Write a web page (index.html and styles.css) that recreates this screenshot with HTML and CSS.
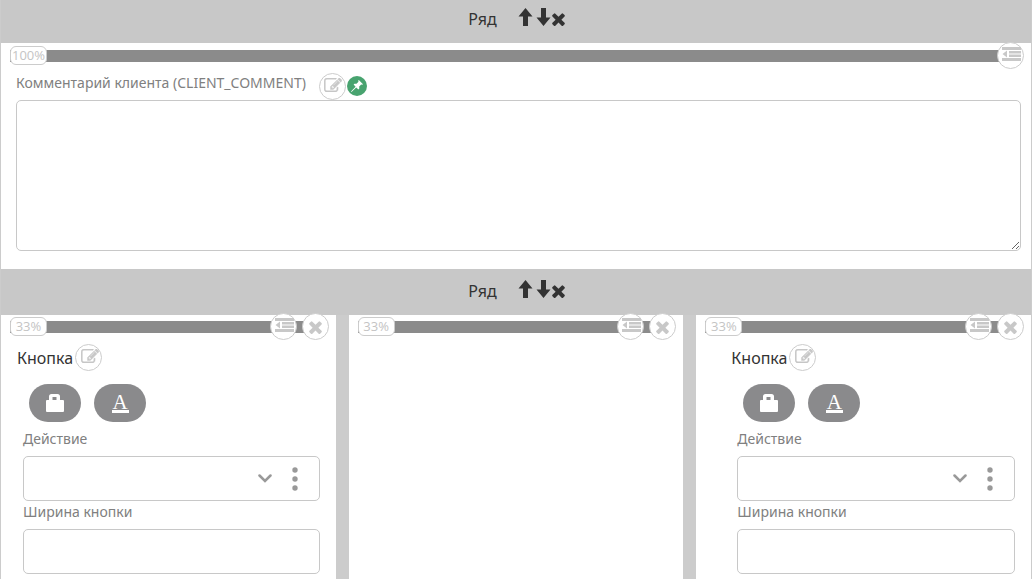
FILE: index.html
```html
<!DOCTYPE html>
<html lang="ru">

<head>
    <meta charset="UTF-8">
    <meta name="viewport" content="width=device-width, initial-scale=1.0">
    <title>Ряд</title>
    <link rel="stylesheet" href="styles.css">
</head>

<body>
    <!-- Shared icons -->
    <svg class="sprite" aria-hidden="true">
        <symbol id="i-up" viewBox="0 0 14 18">
            <path d="M7 0l7 8.500h-4.500V18h-5V8.500H0z"/>
        </symbol>
        <symbol id="i-down" viewBox="0 0 14 18">
            <path d="M7 18l7-8.500H9.500V0h-5v9.500H0z"/>
        </symbol>
        <symbol id="i-close" viewBox="302 238 1188 1316">
            <path d="M1490 1322q0 40-28 68l-136 136q-28 28-68 28t-68-28l-294-294-294 294q-28 28-68 28t-68-28l-136-136q-28-28-28-68t28-68l294-294-294-294q-28-28-28-68t28-68l136-136q28-28 68-28t68 28l294 294 294-294q28-28 68-28t68 28l136 136q28 28 28 68t-28 68l-294 294 294 294q28 28 28 68z"/>
        </symbol>
        <symbol id="i-outdent" viewBox="0 0 19 14">
            <path d="M0 0h19v3H0zM7 4h12v2.500H7zM7 7.500h12V10H7zM0 11h19v3H0zM5 3.500v7L0.500 7z"/>
        </symbol>
        <symbol id="i-edit" viewBox="0 128 1792 1408">
            <path stroke="currentColor" stroke-width="40" d="M888 1184l116-116-152-152-116 116v56h96v96h56zm440-720q-16-16-33 1l-350 350q-17 17-1 33t33-1l350-350q17-17 1-33zm80 594v190q0 119-84.500 203.500t-203.500 84.500h-832q-119 0-203.500-84.500t-84.500-203.500v-832q0-119 84.500-203.500t203.500-84.500h832q63 0 117 25 15 7 18 23 3 17-9 29l-49 49q-14 14-32 8-23-6-45-6h-832q-66 0-113 47t-47 113v832q0 66 47 113t113 47h832q66 0 113-47t47-113v-126q0-13 9-22l64-64q15-15 35-7t20 29zm-96-738l288 288-672 672h-288v-288zm444 132l-92 92-288-288 92-92q28-28 68-28t68 28l152 152q28 28 28 68t-28 68z"/>
        </symbol>
        <symbol id="i-pin" viewBox="0 0 12 12">
            <path d="M7.800 0L12 4.200l-.8.6-1-.3-2 2 .1 2-.9.9L5.200 7.400.5 12 0 11.500l4.600-4.700L2.600 4.600l.9-.9 2 .1 2-2-.3-1z"/>
        </symbol>
        <symbol id="i-bag" viewBox="0 0 18 18">
            <path fill-rule="evenodd" d="M1 6h2V2.500Q3 0 5.500 0h6Q14 0 14 2.500V6h3q1 0 1 1v10q0 1-1 1H1q-1 0-1-1V7q0-1 1-1zM6.500 3v3h4V3z"/>
        </symbol>
        <symbol id="i-chevron" viewBox="0 0 14 9">
            <path d="M1.500 1.500L7 7l5.500-5.500" fill="none" stroke="currentColor" stroke-width="2.500" stroke-linecap="round"/>
        </symbol>
        <symbol id="i-dots" viewBox="0 0 6 24">
            <circle cx="3" cy="3" r="2.700"/>
            <circle cx="3" cy="12" r="2.700"/>
            <circle cx="3" cy="21" r="2.700"/>
        </symbol>
    </svg>

    <main class="builder">
        <section>
            <header class="row-header">
                <span class="row-title">Ряд</span>
                <button class="row-btn" aria-label="Вверх"><svg class="arrow"><use href="#i-up"/></svg></button>
                <button class="row-btn" aria-label="Вниз"><svg class="arrow"><use href="#i-down"/></svg></button>
                <button class="row-btn" aria-label="Удалить"><svg class="cross"><use href="#i-close"/></svg></button>
            </header>
            <div class="column">
                <div class="toolbar">
                    <span class="size">100%</span>
                    <button class="round" aria-label="Отступ"><svg class="outdent"><use href="#i-outdent"/></svg></button>
                </div>
                <div class="comment">
                    <div class="comment-head">
                        <label for="comment">Комментарий клиента (CLIENT_COMMENT)</label>
                        <button class="round" aria-label="Изменить"><svg class="edit"><use href="#i-edit"/></svg></button>
                        <button class="pin" aria-label="Закрепить"><svg><use href="#i-pin"/></svg></button>
                    </div>
                    <textarea id="comment"></textarea>
                </div>
            </div>
        </section>

        <section>
            <header class="row-header">
                <span class="row-title">Ряд</span>
                <button class="row-btn" aria-label="Вверх"><svg class="arrow"><use href="#i-up"/></svg></button>
                <button class="row-btn" aria-label="Вниз"><svg class="arrow"><use href="#i-down"/></svg></button>
                <button class="row-btn" aria-label="Удалить"><svg class="cross"><use href="#i-close"/></svg></button>
            </header>
            <div class="columns">
                <div class="column">
                    <div class="toolbar">
                        <span class="size">33%</span>
                        <button class="round" aria-label="Отступ"><svg class="outdent"><use href="#i-outdent"/></svg></button>
                        <button class="round" aria-label="Удалить"><svg class="cross"><use href="#i-close"/></svg></button>
                    </div>
                    <div class="widget">
                        <div class="widget-head">
                            <span>Кнопка</span>
                            <button class="round" aria-label="Изменить"><svg class="edit"><use href="#i-edit"/></svg></button>
                        </div>
                        <div class="widget-body">
                            <div class="pills">
                                <button class="pill" aria-label="Заливка"><svg class="bag"><use href="#i-bag"/></svg></button>
                                <button class="pill"><span class="letter">A</span></button>
                            </div>
                            <label for="action1">Действие</label>
                            <div class="select-box">
                                <select id="action1"><option></option></select>
                                <svg class="chevron"><use href="#i-chevron"/></svg>
                                <button class="more" aria-label="Ещё"><svg><use href="#i-dots"/></svg></button>
                            </div>
                            <label for="width1">Ширина кнопки</label>
                            <input type="text" id="width1">
                        </div>
                    </div>
                </div>

                <div class="column">
                    <div class="toolbar">
                        <span class="size">33%</span>
                        <button class="round" aria-label="Отступ"><svg class="outdent"><use href="#i-outdent"/></svg></button>
                        <button class="round" aria-label="Удалить"><svg class="cross"><use href="#i-close"/></svg></button>
                    </div>
                </div>

                <div class="column">
                    <div class="toolbar">
                        <span class="size">33%</span>
                        <button class="round" aria-label="Отступ"><svg class="outdent"><use href="#i-outdent"/></svg></button>
                        <button class="round" aria-label="Удалить"><svg class="cross"><use href="#i-close"/></svg></button>
                    </div>
                    <div class="widget indented">
                        <div class="widget-head">
                            <span>Кнопка</span>
                            <button class="round" aria-label="Изменить"><svg class="edit"><use href="#i-edit"/></svg></button>
                        </div>
                        <div class="widget-body">
                            <div class="pills">
                                <button class="pill" aria-label="Заливка"><svg class="bag"><use href="#i-bag"/></svg></button>
                                <button class="pill"><span class="letter">A</span></button>
                            </div>
                            <label for="action2">Действие</label>
                            <div class="select-box">
                                <select id="action2"><option></option></select>
                                <svg class="chevron"><use href="#i-chevron"/></svg>
                                <button class="more" aria-label="Ещё"><svg><use href="#i-dots"/></svg></button>
                            </div>
                            <label for="width2">Ширина кнопки</label>
                            <input type="text" id="width2">
                        </div>
                    </div>
                </div>
            </div>
        </section>
    </main>
</body>

</html>
```
FILE: styles.css
```css
* {
    box-sizing: border-box;
}

body {
    margin: 0;
    background-color: #fff;
    color: #333;
    font-family: 'Noto Sans', 'Open Sans', sans-serif;
    font-size: 14px;
    overflow: hidden;
}

button {
    display: flex;
    align-items: center;
    justify-content: center;
    padding: 0;
    border: none;
    background: none;
    color: inherit;
    cursor: pointer;
}

svg {
    display: block;
    fill: currentColor;
}

label {
    color: #808080;
    line-height: 22px;
}

.sprite {
    display: none;
}

.builder {
    margin: -3px 1px 0 0;
    border: 1px solid #ccc;
    border-top: none;
}

/* Row header */
.row-header {
    display: flex;
    align-items: center;
    justify-content: center;
    height: 46px;
    padding: 0 0 2px 1px;
    background-color: #c8c8c8;
}

.row-title {
    margin-right: 21px;
    font-size: 16px;
}

.row-btn + .row-btn {
    margin-left: 3px;
}

.row-btn:last-child {
    margin-left: 1px;
}

.arrow {
    width: 15px;
    height: 18px;
    margin-bottom: 4px;
}

.cross {
    width: 13px;
    height: 14px;
}

/* Columns */
.columns {
    display: grid;
    grid-template-columns: repeat(3, 1fr);
    gap: 13px;
    background-color: #ccc;
}

.column {
    display: flow-root;
    min-width: 0;
    background-color: #fff;
}

.toolbar {
    display: flex;
    align-items: center;
    gap: 5px;
    height: 27px;
    margin: -1px 7px 0 9px;
    background: linear-gradient(#8b8b8b, #8b8b8b) left / calc(100% - 12px) 12px no-repeat;
}

.columns .toolbar {
    margin-top: -2px;
}

.size {
    width: 37px;
    height: 19px;
    margin: 0 auto 1px 0;
    border: 1px solid #ccc;
    border-radius: 6px;
    background-color: #fff;
    color: #c4c4c4;
    font-family: 'Open Sans', sans-serif;
    font-size: 13px;
    line-height: 16px;
    display: flex;
    justify-content: center;
}

.round {
    flex: none;
    width: 27px;
    height: 27px;
    border: 1px solid #ccc;
    border-radius: 50%;
    background-color: #fff;
    color: #c8c8c8;
}

.outdent {
    width: 19px;
    height: 14px;
    margin: 0 0 3px 2px;
}

.edit {
    width: 18px;
    height: 14px;
    margin: 0 0 3px 2px;
}

/* Comment field */
.comment {
    padding: 3px 10px 18px 15px;
}

.comment-head {
    display: flex;
    align-items: center;
    height: 28px;
}

.comment-head label {
    margin: 0 13px 6px 0;
}

.pin {
    width: 20px;
    height: 20px;
    margin-left: 1px;
    border-radius: 50%;
    background-color: #48a36f;
    color: #fff;
}

.pin svg {
    width: 12px;
    height: 12px;
}

textarea,
input,
.select-box {
    display: block;
    width: 100%;
    border: 1px solid #c8c8c8;
    border-radius: 5px;
    background-color: #fff;
    outline: none;
}

textarea {
    height: 151px;
    resize: vertical;
}

input,
.select-box {
    height: 45px;
}

/* Button widget */
.widget {
    padding: 4px 16px 5px 16px;
}

.indented {
    padding-left: 35px;
}

.widget-head {
    display: flex;
    align-items: center;
    gap: 2px;
    height: 27px;
    font-size: 16px;
}

.widget-body {
    padding-left: 6px;
}

.widget-body label {
    display: block;
    margin-bottom: 6px;
}

.pills {
    display: flex;
    gap: 13px;
    padding: 13px 6px 6px;
}

.pill {
    width: 52px;
    height: 38px;
    border-radius: 19px;
    background-color: #8a8a8c;
    color: #fff;
}

.bag {
    width: 18px;
    height: 18px;
}

.letter {
    width: 17px;
    border-bottom: 3px solid #fff;
    font-family: 'Liberation Serif', serif;
    font-size: 21px;
    line-height: 16px;
}

.select-box {
    display: flex;
    align-items: center;
    padding-right: 16px;
    color: #999;
}

select {
    flex: 1;
    min-width: 0;
    height: 100%;
    border: none;
    background: none;
    appearance: none;
    outline: none;
}

.chevron {
    width: 14px;
    height: 9px;
}

.more {
    width: 16px;
    height: 24px;
    margin-left: 15px;
}

.more svg {
    width: 6px;
    height: 24px;
}
```
